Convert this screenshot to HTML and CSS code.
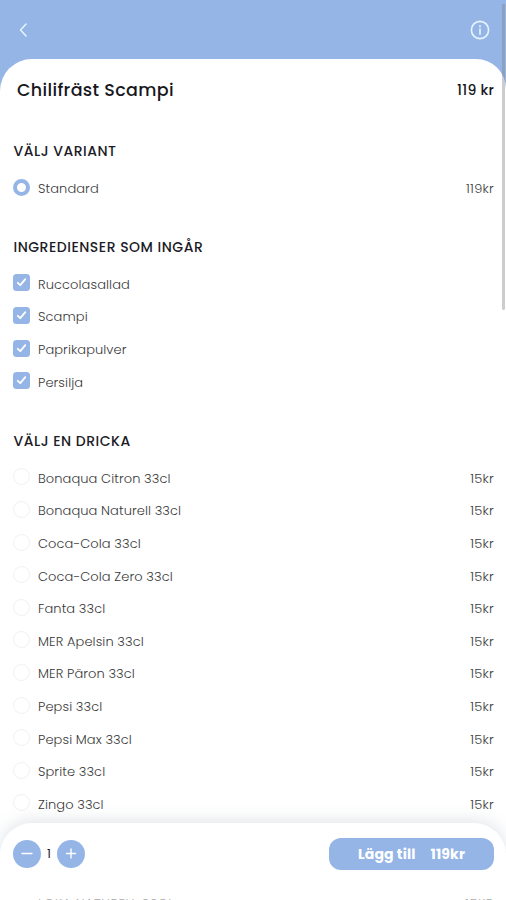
FILE: index.html
```html
<!DOCTYPE html>
<html lang="sv">
<head>
<meta charset="utf-8">
<meta name="viewport" content="width=device-width, initial-scale=1">
<title>Chilifräst Scampi</title>
<link rel="stylesheet" href="styles.css">
</head>
<body>
<header class="topbar">
<svg class="back" viewBox="0 0 10 16"><path d="M8 2 2.5 8 8 14"/></svg>
<svg class="info" viewBox="0 0 20 20"><circle cx="10" cy="10" r="8.6"/><path d="M10 9v5.2M10 5.7v1"/></svg>
</header>
<main class="sheet">
<div class="title"><h1>Chilifräst Scampi</h1><strong>119 kr</strong></div>
<section>
<h2>VÄLJ VARIANT</h2>
<div class="row"><i class="radio on"></i><span>Standard</span><b>119kr</b></div>
</section>
<section>
<h2>INGREDIENSER SOM INGÅR</h2>
<div class="row"><svg class="check" viewBox="0 0 17 17"><path d="m4.8 8.8 2.5 2.4 5-6"/></svg><span>Ruccolasallad</span></div>
<div class="row"><svg class="check" viewBox="0 0 17 17"><path d="m4.8 8.8 2.5 2.4 5-6"/></svg><span>Scampi</span></div>
<div class="row"><svg class="check" viewBox="0 0 17 17"><path d="m4.8 8.8 2.5 2.4 5-6"/></svg><span>Paprikapulver</span></div>
<div class="row"><svg class="check" viewBox="0 0 17 17"><path d="m4.8 8.8 2.5 2.4 5-6"/></svg><span>Persilja</span></div>
</section>
<section class="drinks">
<h2>VÄLJ EN DRICKA</h2>
<div class="row"><i class="radio"></i><span>Bonaqua Citron 33cl</span><b>15kr</b></div>
<div class="row"><i class="radio"></i><span>Bonaqua Naturell 33cl</span><b>15kr</b></div>
<div class="row"><i class="radio"></i><span>Coca-Cola 33cl</span><b>15kr</b></div>
<div class="row"><i class="radio"></i><span>Coca-Cola Zero 33cl</span><b>15kr</b></div>
<div class="row"><i class="radio"></i><span>Fanta 33cl</span><b>15kr</b></div>
<div class="row"><i class="radio"></i><span>MER Apelsin 33cl</span><b>15kr</b></div>
<div class="row"><i class="radio"></i><span>MER Päron 33cl</span><b>15kr</b></div>
<div class="row"><i class="radio"></i><span>Pepsi 33cl</span><b>15kr</b></div>
<div class="row"><i class="radio"></i><span>Pepsi Max 33cl</span><b>15kr</b></div>
<div class="row"><i class="radio"></i><span>Sprite 33cl</span><b>15kr</b></div>
<div class="row"><i class="radio"></i><span>Zingo 33cl</span><b>15kr</b></div>
</section>
</main>
<footer class="bar">
<div class="stepper">
<svg viewBox="0 0 28 28"><path d="M9 13.5h10"/></svg>
<span>1</span>
<svg viewBox="0 0 28 28"><path d="M9.5 13.5h9M14 9v9"/></svg>
</div>
<div class="add"><span>Lägg till</span><span>119kr</span></div>
</footer>
<div class="peek"><span>LOKA NATURELL 33CL</span><span>15KR</span></div>
<div class="scrollbar"></div>
</body>
</html>
```
FILE: styles.css
```css
* { box-sizing: border-box; }
body {
  margin: 0;
  height: 900px;
  overflow: hidden;
  position: relative;
  background: linear-gradient(#95b5e6 100px, #fff 100px);
  font-family: Poppins, Inter, sans-serif;
  color: #17171c;
}
h1, h2 { margin: 0; }
svg { display: block; fill: none; stroke-linecap: round; stroke-linejoin: round; }
.topbar {
  height: 59px;
  padding: 1px 16px 0 18px;
  display: flex;
  justify-content: space-between;
  align-items: center;
}
.back { width: 10px; height: 16px; stroke: #e2f4ff; stroke-width: 1.6; }
.info { width: 20px; height: 20px; stroke: #e9f4ff; stroke-width: 1.6; }
.sheet {
  height: 841px;
  background: #fff;
  border-radius: 32px 30px 0 0;
  padding: 16px 12px 0 13px;
}
.title {
  height: 30px;
  padding-left: 4px;
  display: flex;
  justify-content: space-between;
  align-items: center;
}
h1 { font-size: 17.5px; font-weight: 500; letter-spacing: .34px; }
.title strong { font-size: 14px; font-weight: 500; letter-spacing: .3px; margin-right: -.3px; }
section { padding-top: 30px; }
section + section { padding-top: 26px; }
h2 { height: 32px; line-height: 32px; margin-bottom: 5px; padding-left: .5px; font-size: 14px; font-weight: 500; letter-spacing: .5px; color: #1c1c27; white-space: nowrap; }
section.drinks { padding-top: 26.6px; }
.row { height: 32.6px; display: flex; align-items: center; font-size: 13px; letter-spacing: .08px; color: #3a3a3a; }
.row span { margin-left: 8px; padding-top: 2px; font-weight: 300; }
.row b { margin-left: auto; padding-top: 2px; font-weight: 300; letter-spacing: .25px; }
.radio { width: 17px; height: 17px; border-radius: 50%; border: 1px solid #f1f1f3; margin-bottom: 2px; }
.radio.on { border: 4.5px solid #95b5e6; }
.check { width: 17px; height: 17px; border-radius: 3.5px; background: #95b5e6; margin-bottom: 2px; stroke: #fff; stroke-width: 1.8; }
.bar {
  position: absolute;
  left: 0; right: 0; top: 823px;
  height: 75px;
  background: #fff;
  border-radius: 32px 32px 0 0;
  box-shadow: 0 -3px 16px rgba(110, 125, 145, .2);
  clip-path: inset(-30px 0 0 0);
  padding: 0 12px 13px 13px;
  display: flex;
  justify-content: space-between;
  align-items: center;
}
.stepper { display: flex; align-items: center; font-size: 12px; }
.stepper svg { width: 28px; height: 28px; border-radius: 50%; background: #95b5e6; stroke: #fff; stroke-width: 1.4; }
.stepper span { width: 16px; text-align: center; }
.add {
  width: 165px;
  height: 32px;
  border-radius: 12px;
  background: #95b5e6;
  color: #fff;
  font-size: 14px;
  font-weight: 700;
  letter-spacing: .15px;
  display: flex;
  justify-content: center;
  align-items: center;
  gap: 15px;
}
.peek {
  position: absolute;
  left: 38px; right: 12px; top: 898px;
  height: 2px;
  overflow: hidden;
  display: flex;
  justify-content: space-between;
  font-size: 13px;
  letter-spacing: .5px;
  line-height: 12px;
  font-weight: 300;
  color: #aaa;
}
.scrollbar { position: absolute; right: 1px; top: 4px; width: 3px; height: 306px; background: rgba(130, 130, 130, .4); border-radius: 0 0 2px 2px; }
```
